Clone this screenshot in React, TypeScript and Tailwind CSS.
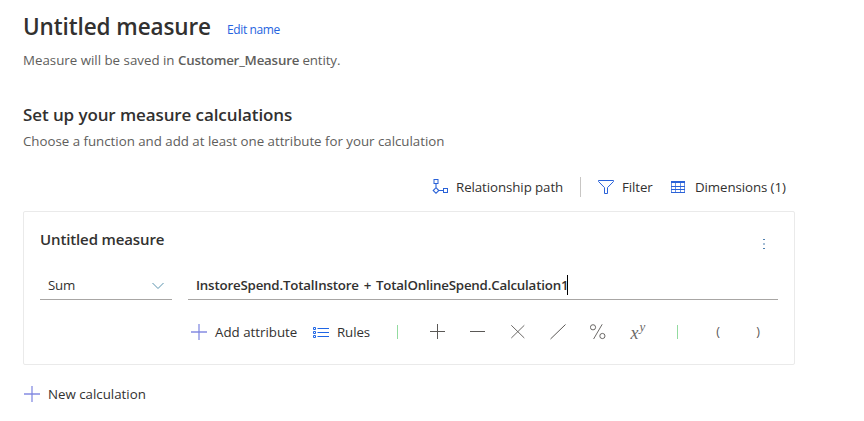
import type { ReactNode } from "react";

function PlusIcon({ color }: { color: string }) {
  return (
    <svg width="16" height="16" viewBox="0 0 16 16" fill="none" stroke={color} className="shrink-0">
      <path d="M8 0v16" strokeWidth="1.2" />
      <path d="M0 8h16" strokeWidth="1.4" />
    </svg>
  );
}

function PathIcon() {
  return (
    <svg width="16" height="16" viewBox="0 0 16 16" fill="none" stroke="#2a62d8" className="shrink-0">
      <rect x="2" y="0.5" width="4" height="4" />
      <path d="M4 4.5V8.7M4 8.7L6.8 11.5L4 14.3L1.2 11.5ZM6.8 11.5H11.5" strokeWidth="1.1" />
      <rect x="11.5" y="9.5" width="4" height="4" />
    </svg>
  );
}

function FilterIcon() {
  return (
    <svg width="16" height="16" viewBox="0 0 16 16" fill="none" stroke="#2a62d8" className="shrink-0">
      <path d="M0.5 1.5H15.5V2.5L9.5 8.6V14.5H6.5V8.6L0.5 2.5Z" />
    </svg>
  );
}

function TableIcon() {
  return (
    <svg width="14" height="14" viewBox="0 0 14 14" fill="none" stroke="#2a62d8" className="shrink-0">
      <path d="M0.5 1V13M4.5 2V13M9.5 2V13M13.5 1V13" strokeOpacity=".7" />
      <path d="M0 2H14" strokeWidth="2" />
      <path d="M0 6.5H14M0 9.5H14M0 12.5H14" />
    </svg>
  );
}

function RulesIcon() {
  return (
    <svg width="16" height="13" viewBox="0 0 16 13" fill="none" stroke="#1f66e5" className="shrink-0">
      <path d="M4.5 2.5H16M4.5 6.5H16M4.5 10.5H16" />
      <path d="M0.5 1.5h2v2h-2zM0.5 5.5h2v2h-2zM0.5 9.5h2v2h-2z" />
    </svg>
  );
}

function Op({ children }: { children: ReactNode }) {
  return <button className="flex h-8 w-10 items-center justify-center text-[#5a5856]">{children}</button>;
}

function Bar() {
  return (
    <span className="flex h-8 w-10 items-center justify-center pr-px">
      <span className="h-[14px] w-px bg-[#93dba0]" />
    </span>
  );
}

export default function App() {
  return (
    <div className="h-[421px] w-[864px] overflow-hidden bg-white pl-[23px] font-['Open_Sans','Noto_Sans',sans-serif] text-[13.3px] whitespace-pre text-[#323130]">
      <header className="pt-[10px]">
        <div className="flex h-[34px] items-start">
          <h1 className="w-[204px] text-[22.5px] leading-[34px] font-semibold tracking-[-0.1px]">Untitled measure</h1>
          <a className="pt-[10px] text-[12px] leading-5 tracking-[-0.38px] text-[#2563e0]">Edit name</a>
        </div>
        <p className="mt-[6px] h-5 leading-5 text-[#605e5c]">
          Measure will be saved in <b className="font-semibold tracking-[-0.2px]">Customer_Measure</b><span className="tracking-[-0.12px]"> entity.</span>
        </p>
      </header>

      <section className="pt-[33px]">
        <h2 className="h-6 text-[17px] leading-6 font-semibold tracking-[-0.1px]">Set up your measure calculations</h2>
        <p className="mt-1 h-5 leading-5 tracking-[-0.015px] text-[#605e5c]">Choose a function and add at least one attribute for your calculation</p>
      </section>

      <div className="mt-[26px] flex h-5 items-center pl-[409px]">
        <PathIcon />
        <span className="ml-2 w-[124px] pt-px tracking-[-0.08px]">Relationship path</span>
        <span className="h-5 w-px bg-[#c8c6c4]" />
        <span className="ml-[17px] flex"><FilterIcon /></span>
        <span className="ml-2 w-[49px] pt-px tracking-[-0.1px]">Filter</span>
        <TableIcon />
        <span className="ml-[10px] pt-px tracking-[-0.09px]">Dimensions (1)</span>
      </div>

      <section className="mt-[14px] h-[154px] w-[772px] rounded-[2px] border border-[#eaeaea] pl-4">
        <div className="flex h-[58px] items-start pt-[15px]">
          <h3 className="w-[719px] text-[15px] leading-6 font-semibold tracking-[-0.13px]">Untitled measure</h3>
          <svg width="10" height="14" viewBox="0 0 10 14" fill="#4e7fae" className="mt-[10px]">
            <path d="M4 2h2v1H4zM4 6.5h2v1H4zM4 11h2v1H4z" />
          </svg>
        </div>
        <div className="flex h-[30px]">
          <div className="flex w-[132px] items-center justify-between border-b border-[#a8a6a4] pr-2 pl-2">
            <span className="pt-[2px] tracking-[-0.2px]">Sum</span>
            <svg width="12" height="8" viewBox="0 0 12 8" fill="none" stroke="#5a93ae" className="mt-[2px]">
              <path d="M0.5 1L6 6.5L11.5 1" />
            </svg>
          </div>
          <div className="ml-4 flex w-[590px] items-center border-b border-[#a8a6a4] pl-2">
            <span className="pt-[2px] font-semibold tracking-[-0.19px] [word-spacing:1.7px]">InstoreSpend.TotalInstore + TotalOnlineSpend.Calculation1</span>
            <span className="-ml-[1px] h-5 w-px bg-black" />
          </div>
        </div>
        <div className="mt-4 flex h-8 items-center pl-[151px]">
          <PlusIcon color="#7b83e0" />
          <span className="ml-2 w-[98px] pt-px">Add attribute</span>
          <RulesIcon />
          <span className="ml-2 w-[41px] pt-px tracking-[-0.1px]">Rules</span>
          <Bar />
          <Op>
            <svg width="16" height="16" viewBox="0 0 16 16" stroke="currentColor"><path d="M0 7.5H15M7.5 0V15" /></svg>
          </Op>
          <Op>
            <svg width="16" height="16" viewBox="0 0 16 16" stroke="currentColor"><path d="M0 7.5H15" /></svg>
          </Op>
          <Op>
            <svg width="16" height="16" viewBox="0 0 16 16" stroke="currentColor" strokeWidth=".9"><path d="M1.3 1.3L14.3 14M14.3 1.3L1.3 14" /></svg>
          </Op>
          <Op>
            <svg width="16" height="16" viewBox="0 0 16 16" stroke="currentColor"><path d="M0.5 15L15.5 0.5" /></svg>
          </Op>
          <Op>
            <svg width="16" height="16" viewBox="0 0 16 16" fill="none" stroke="currentColor" strokeWidth=".9">
              <circle cx="3" cy="3.3" r="2.6" /><circle cx="12.4" cy="12" r="2.6" /><path d="M12.2 0.3L3.6 15" />
            </svg>
          </Op>
          <Op>
            <span className="flex items-start font-['Liberation_Serif',serif] leading-4 text-[#6b6967] italic">
              <span className="pt-px text-[18px]">x</span>
              <span className="-mt-[5px] ml-px text-[13px]">y</span>
            </span>
          </Op>
          <Bar />
          <Op><span className="pt-px text-[12.5px]">(</span></Op>
          <Op><span className="pt-px text-[12.5px]">)</span></Op>
        </div>
      </section>

      <div className="mt-[19px] flex h-5 items-center pl-[1px]">
        <PlusIcon color="#7b83e0" />
        <span className="ml-2 pt-px">New calculation</span>
      </div>
    </div>
  );
}
